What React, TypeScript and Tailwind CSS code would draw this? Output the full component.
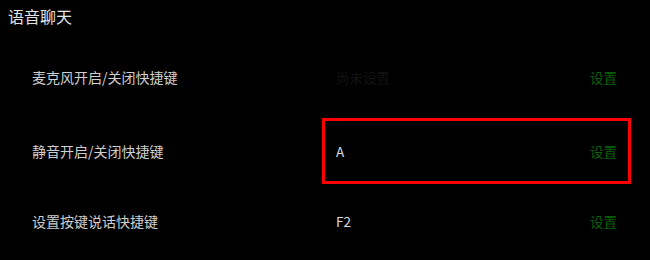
import React from "react";

const rows = [
  { label: "麦克风开启/关闭快捷键", value: "尚未设置", empty: true, active: false, gap: "mt-[17px]" },
  { label: "静音开启/关闭快捷键", value: "A", empty: false, active: true, gap: "mt-[8px]" },
  { label: "设置按键说话快捷键", value: "F2", empty: false, active: false, gap: "mt-[4px]" },
];

const Hotkey_Row = ({
  label,
  value,
  empty,
  active,
  gap,
}: {
  label: string;
  value: string;
  empty: boolean;
  active: boolean;
  gap: string;
}) => {
  return (
    <div className={`flex items-center h-[66px] pl-[32px] ${gap}`}>
      <p className="w-[290px] text-[14px] text-[#cfcfcf]">{label}</p>
      <div
        className={`w-[309px] h-[66px] border-[3px] px-[11px] flex items-center justify-between ${
          active ? "border-[#ff0000]" : "border-transparent"
        }`}
      >
        <span className={`text-[13.5px] ${empty ? "text-[#131313]" : "text-[#dcdcdc]"}`}>{value}</span>
        <span className="text-[13.5px] text-[#0a620a] cursor-pointer">设置</span>
      </div>
    </div>
  );
};

export default function App() {
  return (
    <div
      className="w-[650px] h-[260px] bg-black overflow-hidden"
      style={{ fontFamily: '"Noto Sans CJK SC", "Noto Sans", sans-serif' }}
    >
      <h1 className="pl-[8px] pt-[5px] text-[16px] leading-[22px] text-[#e2e2e2]">语音聊天</h1>
      {rows.map((r) => (
        <Hotkey_Row key={r.label} {...r} />
      ))}
    </div>
  );
}
